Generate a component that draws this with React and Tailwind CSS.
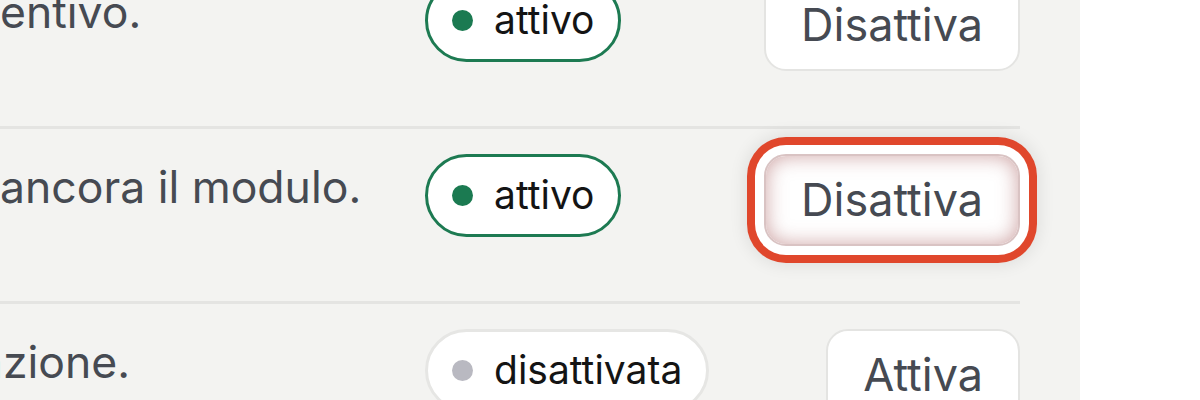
const rows = [
  { text: 'entivo.', shift: 'ml-0', active: true, focused: false },
  { text: 'ancora il modulo.', shift: 'ml-0', active: true, focused: true },
  { text: 'azione.', shift: '-ml-[22px]', active: false, focused: false },
]

function StatusPill({ active }) {
  if (active) {
    return (
      <span className="inline-flex h-[83px] items-center gap-[21px] rounded-full border-[3px] border-[#1d7a52] bg-white pl-[24px] pr-[24px] text-[39px] text-[#141414]">
        <span className="h-[21px] w-[21px] rounded-full bg-[#1b7a51]" />
        attivo
      </span>
    )
  }
  return (
    <span className="inline-flex h-[83px] items-center gap-[21px] rounded-full border-[3px] border-[#e6e6e4] bg-white pl-[24px] pr-[24px] text-[39px] text-[#141414]">
      <span className="h-[21px] w-[21px] rounded-full bg-[#b9b9c1]" />
      disattivata
    </span>
  )
}

function ToggleButton({ active, focused }) {
  if (focused) {
    return (
      <button
        type="button"
        className="h-[92px] rounded-[22px] border-2 border-[#d9c3c3] bg-white px-[35px] text-[45px] text-[#464a52] ring-[8px] ring-[#e0472c] ring-offset-[9px] ring-offset-white inset-shadow-[0_0_20px_rgba(165,90,90,0.55)] shadow-[0_0_16px_20px_rgba(0,0,0,0.08)]"
      >
        Disattiva
      </button>
    )
  }
  return (
    <button
      type="button"
      className="h-[92px] rounded-[22px] border-2 border-[#e4e4e2] bg-white px-[35px] text-[45px] text-[#464a52]"
    >
      {active ? 'Disattiva' : 'Attiva'}
    </button>
  )
}

export default function App() {
  return (
    <div className="flex h-[400px] w-[1200px] overflow-hidden bg-white font-['Inter',sans-serif]">
      <div className="w-[1080px] shrink-0 bg-[#f3f3f1] pr-[60px]">
        <div className="-mt-[46px]">
          {rows.map((row, i) => (
            <div
              key={i}
              className="grid h-[175px] grid-cols-[425px_1fr_auto] items-start border-b-[3px] border-[#e4e4e2] pt-[25px]"
            >
              <div className="overflow-hidden whitespace-nowrap text-[44.5px] leading-[1.5] text-[#464a52]">
                <span className={'inline-block ' + row.shift}>{row.text}</span>
              </div>
              <div>
                <StatusPill active={row.active} />
              </div>
              <div className="flex justify-end">
                <ToggleButton active={row.active} focused={row.focused} />
              </div>
            </div>
          ))}
        </div>
      </div>
      <div className="flex-1" />
    </div>
  )
}
